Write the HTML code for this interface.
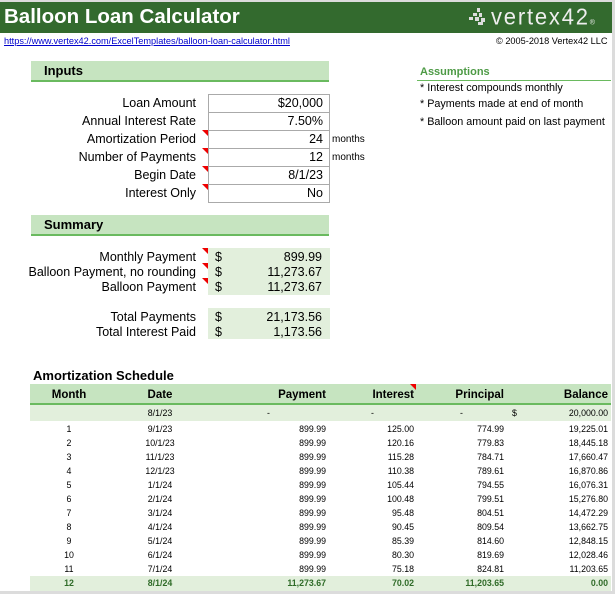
<!DOCTYPE html>
<html><head><style>
*{margin:0;padding:0;box-sizing:border-box}
body{width:615px;height:594px;background:#fff;position:relative;overflow:hidden;font-family:"Liberation Sans",Arial,sans-serif;color:#000}
.a{position:absolute;white-space:nowrap}
.bar{position:absolute;background:#c6e4c0;border-bottom:2px solid #6aba5f}
.box{position:absolute;left:208px;width:122px;height:19px;border:1px solid #aaa;font-size:12.5px;text-align:right;padding-right:6px;line-height:17px}
.lbl{position:absolute;right:419px;font-size:12.5px;text-align:right}
.tri{position:absolute;width:0;height:0;border-top:6px solid #e00;border-left:6px solid transparent}
.g{position:absolute;left:208px;width:122px;background:#e2efdc}
.r{position:absolute;left:30px;width:581px;height:14px;font-size:8.8px;line-height:14px}
.r span{position:absolute}
.c1{left:0;width:78px;text-align:center}
.c2{left:100px;width:60px;text-align:center}
.c3{right:285px}.c4{right:197px}.c5{right:107px}.c6{right:3px}
</style></head><body>
<div class="a" style="left:0;top:2px;width:612px;height:31px;background:#336a2e"></div>
<div class="a" style="left:4px;top:5px;font-size:20.5px;font-weight:bold;color:#fff">Balloon Loan Calculator</div>
<div class="a" style="left:467px;top:8px;width:22px;height:18px;">
<svg width="22" height="18"><g fill="#ddd"><rect x="10" y="0" width="3" height="4"/><rect x="6" y="5" width="4" height="3"/><rect x="12" y="5" width="3" height="4"/><rect x="2" y="9" width="4" height="3"/><rect x="8" y="9" width="4" height="4"/><rect x="14" y="10" width="4" height="4"/><rect x="11" y="14" width="5" height="3"/></g></svg></div>
<div class="a" style="left:491px;top:4px;font-size:22px;color:#eee;letter-spacing:1.8px;transform:scaleY(1.05)">vertex42<span style="font-size:7px">®</span></div>
<div class="a" style="left:4px;top:36px;font-size:9.2px;color:#00c;text-decoration:underline">https://www.vertex42.com/ExcelTemplates/balloon-loan-calculator.html</div>
<div class="a" style="left:496px;top:36px;font-size:9.2px">© 2005-2018 Vertex42 LLC</div>
<div class="bar" style="left:31px;top:61px;width:298px;height:21px"></div>
<div class="a" style="left:44px;top:63px;font-size:13px;font-weight:bold">Inputs</div>
<div class="a" style="left:420px;top:66px;font-size:11px;font-weight:bold;color:#4d9a45">Assumptions</div>
<div class="a" style="left:417px;top:80px;width:194px;height:1px;background:#6aba5f"></div>
<div class="a" style="left:420px;top:82px;font-size:10.8px">* Interest compounds monthly</div>
<div class="a" style="left:420px;top:98px;font-size:10.8px">* Payments made at end of month</div>
<div class="a" style="left:420px;top:116px;font-size:10.8px">* Balloon amount paid on last payment</div>
<div class="lbl" style="top:96px">Loan Amount</div><div class="box" style="top:94px">$20,000</div>
<div class="lbl" style="top:114px">Annual Interest Rate</div><div class="box" style="top:112px">7.50%</div>
<div class="lbl" style="top:132px">Amortization Period</div><div class="box" style="top:130px">24</div><div class="tri" style="left:202px;top:130px"></div>
<div class="lbl" style="top:150px">Number of Payments</div><div class="box" style="top:148px">12</div><div class="tri" style="left:202px;top:148px"></div>
<div class="lbl" style="top:168px">Begin Date</div><div class="box" style="top:166px">8/1/23</div><div class="tri" style="left:202px;top:166px"></div>
<div class="lbl" style="top:186px">Interest Only</div><div class="box" style="top:184px">No</div><div class="tri" style="left:202px;top:184px"></div>
<div class="a" style="left:332px;top:134px;font-size:10px">months</div>
<div class="a" style="left:332px;top:152px;font-size:10px">months</div>
<div class="bar" style="left:31px;top:215px;width:298px;height:21px"></div>
<div class="a" style="left:44px;top:217px;font-size:13px;font-weight:bold">Summary</div>
<div class="g" style="top:248px;height:47px"></div>
<div class="g" style="top:308px;height:31px"></div>
<div class="lbl" style="top:250px">Monthly Payment</div><div class="tri" style="left:202px;top:248px"></div>
<div class="lbl" style="top:265px">Balloon Payment, no rounding</div><div class="tri" style="left:202px;top:263px"></div>
<div class="lbl" style="top:280px">Balloon Payment</div><div class="tri" style="left:202px;top:278px"></div>
<div class="lbl" style="top:310px">Total Payments</div>
<div class="lbl" style="top:325px">Total Interest Paid</div>
<div class="a" style="left:215px;top:250px;font-size:12.5px;line-height:15px">$<br>$<br>$</div>
<div class="a" style="right:293px;top:250px;font-size:12.5px;line-height:15px;text-align:right">899.99<br>11,273.67<br>11,273.67</div>
<div class="a" style="left:215px;top:310px;font-size:12.5px;line-height:15px">$<br>$</div>
<div class="a" style="right:293px;top:310px;font-size:12.5px;line-height:15px;text-align:right">21,173.56<br>1,173.56</div>
<div class="a" style="left:33px;top:368px;font-size:13px;font-weight:bold">Amortization Schedule</div>
<div class="bar" style="left:30px;top:384px;width:581px;height:21px"></div>
<div class="r" style="top:388px;font-size:11.5px;font-weight:bold;height:16px"><span class="c1">Month</span><span class="c2">Date</span><span class="c3">Payment</span><span class="c4">Interest</span><span class="c5">Principal</span><span class="c6">Balance</span></div>
<div class="tri" style="left:410px;top:384px"></div>
<div class="r" style="top:405px;height:16px;line-height:16px;background:#e2efdc"><span class="c2">8/1/23</span><span style="left:237px">-</span><span style="left:341px">-</span><span style="left:430px">-</span><span style="left:482px">$</span><span class="c6">20,000.00</span></div>
<div class="r" style="top:422px"><span class="c1">1</span><span class="c2">9/1/23</span><span class="c3">899.99</span><span class="c4">125.00</span><span class="c5">774.99</span><span class="c6">19,225.01</span></div>
<div class="r" style="top:436px"><span class="c1">2</span><span class="c2">10/1/23</span><span class="c3">899.99</span><span class="c4">120.16</span><span class="c5">779.83</span><span class="c6">18,445.18</span></div>
<div class="r" style="top:450px"><span class="c1">3</span><span class="c2">11/1/23</span><span class="c3">899.99</span><span class="c4">115.28</span><span class="c5">784.71</span><span class="c6">17,660.47</span></div>
<div class="r" style="top:464px"><span class="c1">4</span><span class="c2">12/1/23</span><span class="c3">899.99</span><span class="c4">110.38</span><span class="c5">789.61</span><span class="c6">16,870.86</span></div>
<div class="r" style="top:478px"><span class="c1">5</span><span class="c2">1/1/24</span><span class="c3">899.99</span><span class="c4">105.44</span><span class="c5">794.55</span><span class="c6">16,076.31</span></div>
<div class="r" style="top:492px"><span class="c1">6</span><span class="c2">2/1/24</span><span class="c3">899.99</span><span class="c4">100.48</span><span class="c5">799.51</span><span class="c6">15,276.80</span></div>
<div class="r" style="top:506px"><span class="c1">7</span><span class="c2">3/1/24</span><span class="c3">899.99</span><span class="c4">95.48</span><span class="c5">804.51</span><span class="c6">14,472.29</span></div>
<div class="r" style="top:520px"><span class="c1">8</span><span class="c2">4/1/24</span><span class="c3">899.99</span><span class="c4">90.45</span><span class="c5">809.54</span><span class="c6">13,662.75</span></div>
<div class="r" style="top:534px"><span class="c1">9</span><span class="c2">5/1/24</span><span class="c3">899.99</span><span class="c4">85.39</span><span class="c5">814.60</span><span class="c6">12,848.15</span></div>
<div class="r" style="top:548px"><span class="c1">10</span><span class="c2">6/1/24</span><span class="c3">899.99</span><span class="c4">80.30</span><span class="c5">819.69</span><span class="c6">12,028.46</span></div>
<div class="r" style="top:562px"><span class="c1">11</span><span class="c2">7/1/24</span><span class="c3">899.99</span><span class="c4">75.18</span><span class="c5">824.81</span><span class="c6">11,203.65</span></div>
<div class="r" style="top:576px;height:15px;background:#e2efdc;color:#2f6b28;font-weight:bold"><span class="c1">12</span><span class="c2">8/1/24</span><span class="c3">11,273.67</span><span class="c4">70.02</span><span class="c5">11,203.65</span><span class="c6">0.00</span></div>
<div class="a" style="left:612px;top:0;width:3px;height:594px;background:#dcdcdc"></div>
<div class="a" style="left:0;top:591px;width:615px;height:3px;background:#dcdcdc"></div>
<div class="a" style="left:0;top:0;width:615px;height:2px;background:#dcdcdc"></div>
</body></html>
